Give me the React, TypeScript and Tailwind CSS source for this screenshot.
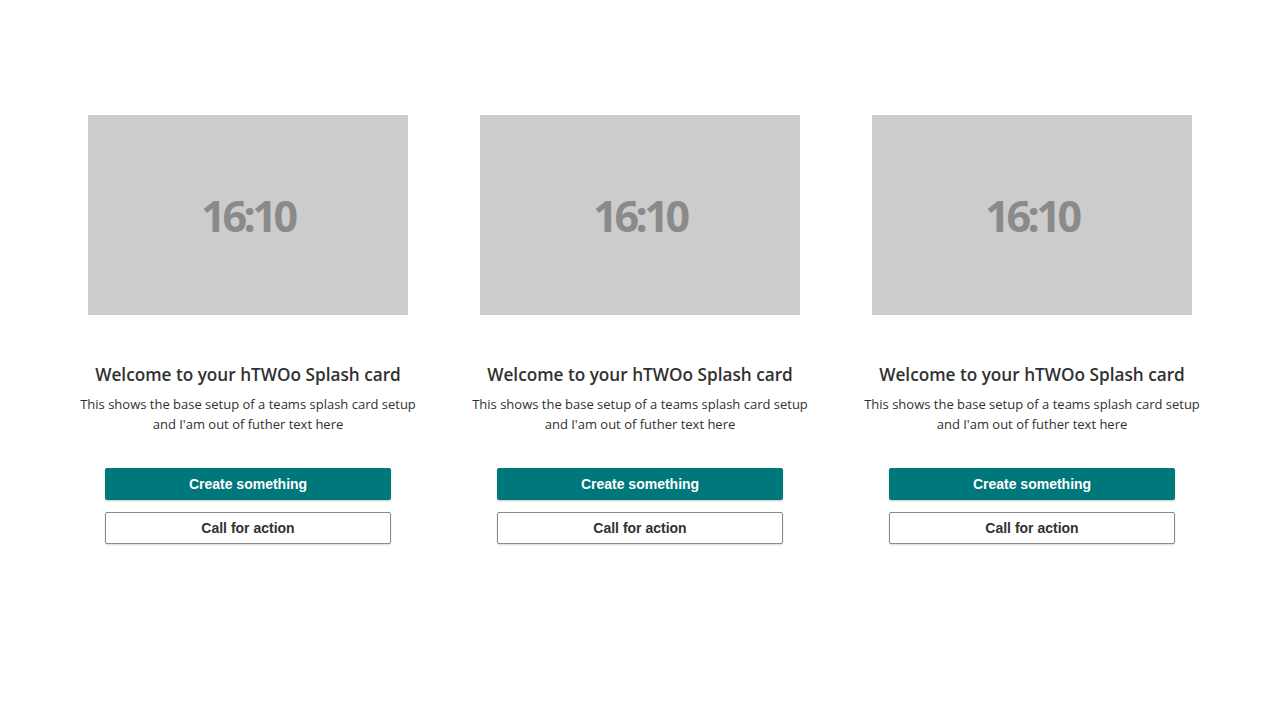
const cards = [0, 1, 2]

function SplashCard() {
  return (
    <div className="flex w-[344px] flex-col items-center">
      <div className="flex h-[200px] w-[320px] items-center justify-center bg-[#cccccc]">
        <span className="pt-[3px] font-['Open_Sans',sans-serif] text-[43px] font-bold tracking-[-0.08em] text-[#8a8a8a]">
          16:10
        </span>
      </div>
      <h2 className="mt-[48px] font-['Open_Sans',sans-serif] text-[17.2px] font-semibold leading-[24px] text-[#323130]">
        Welcome to your hTWOo Splash card
      </h2>
      <p className="mt-[7px] text-center font-['Open_Sans',sans-serif] text-[13px] leading-[20px] text-[#323130]">
        This shows the base setup of a teams splash card setup
        <br />
        and I'am out of futher text here
      </p>
      <div className="mt-[34px] flex w-[286px] flex-col gap-3">
        <button className="h-8 rounded-[2px] bg-[#00777a] font-['Liberation_Sans',sans-serif] text-[14px] font-bold text-white shadow-[0_1px_2px_rgba(0,0,0,0.2)]">
          Create something
        </button>
        <button className="h-8 rounded-[2px] border border-[#8a8886] bg-white font-['Liberation_Sans',sans-serif] text-[14px] font-bold text-[#323130] shadow-[0_1px_2px_rgba(0,0,0,0.15)]">
          Call for action
        </button>
      </div>
    </div>
  )
}

export default function App() {
  return (
    <div className="min-h-[720px] w-full bg-white">
      <div className="flex justify-center gap-12 pt-[115px]">
        {cards.map((c) => (
          <SplashCard key={c} />
        ))}
      </div>
    </div>
  )
}
